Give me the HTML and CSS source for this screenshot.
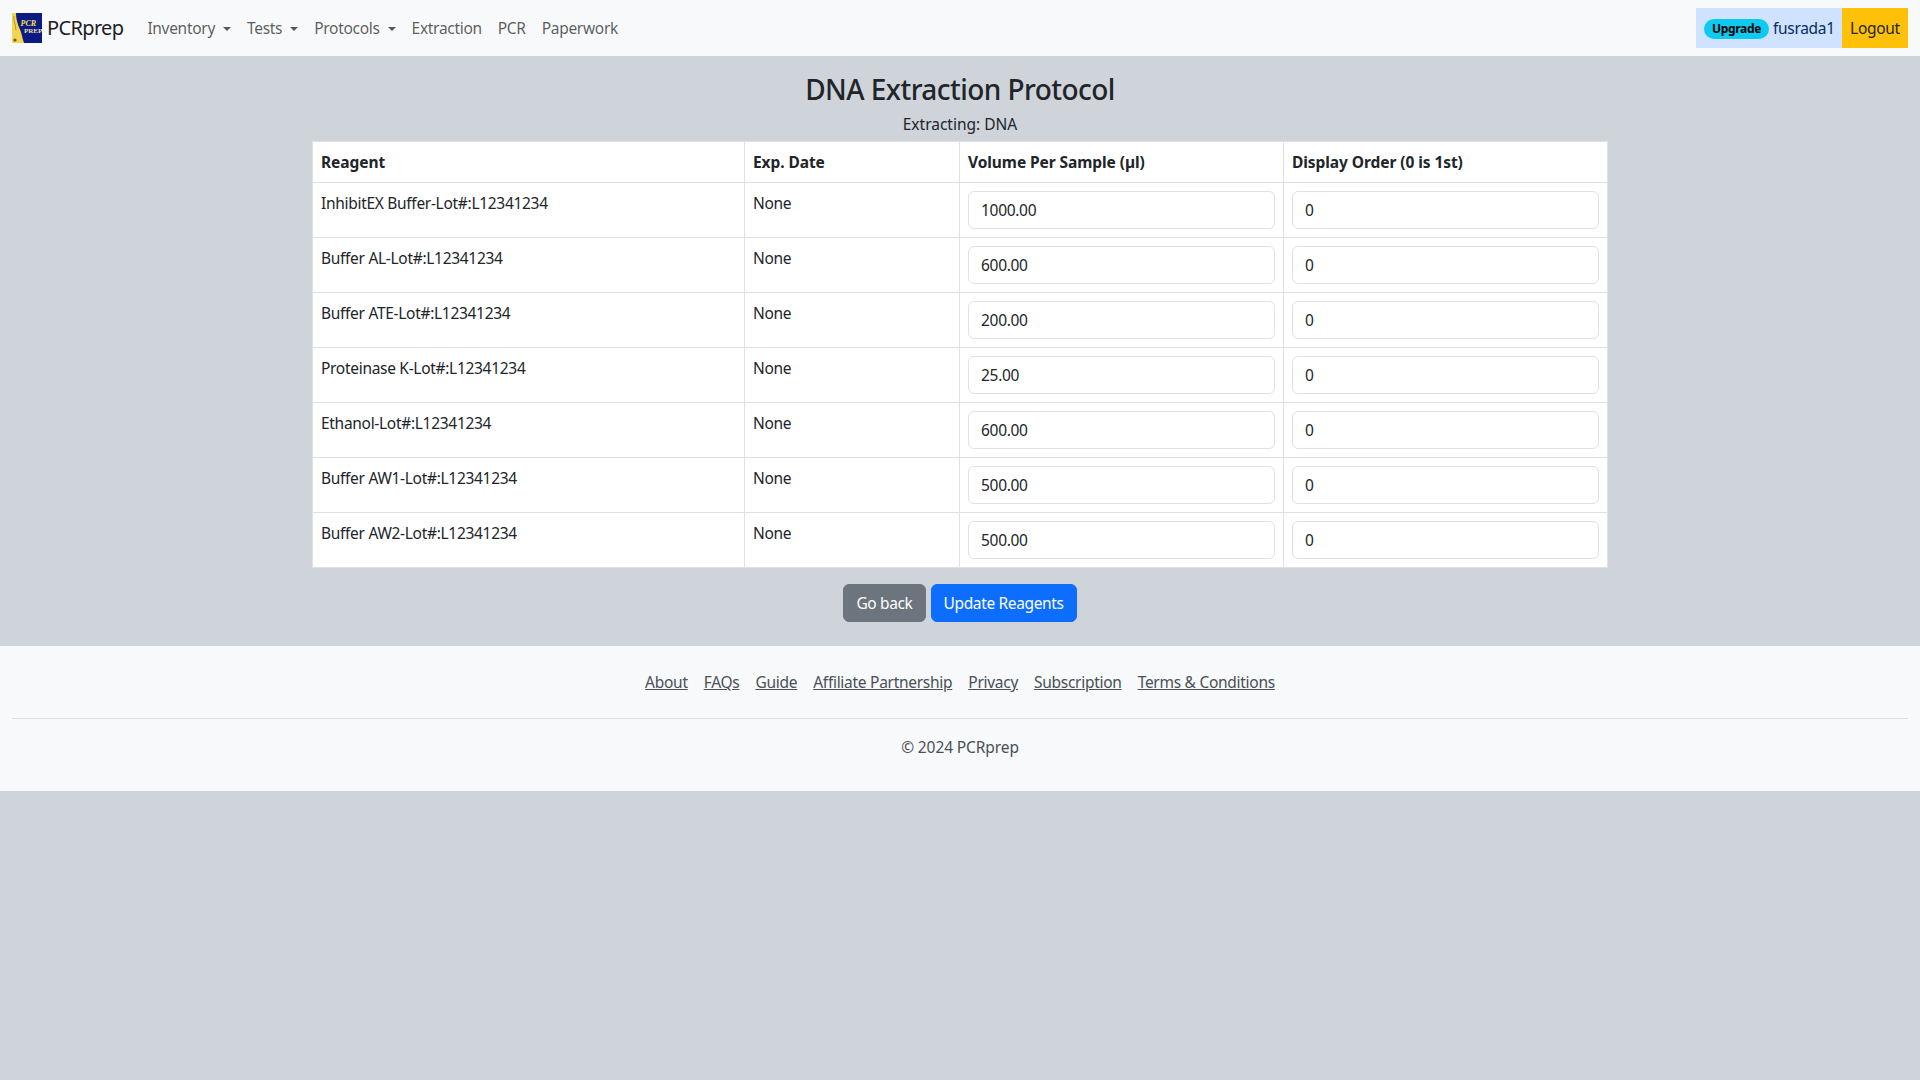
FILE: index.html
```html
<!DOCTYPE html>
<html lang="en">
<head>
<meta charset="utf-8">
<title>DNA Extraction Protocol</title>
<link rel="stylesheet" href="styles.css">
</head>
<body>
<nav class="navbar">
  <a class="brand" href="#">
    <svg class="logo" width="30" height="30" viewBox="0 0 30 30">
      <rect width="30" height="30" fill="#0c1a84"/>
      <path d="M0 0H4C4 8 7 14 9 19C10 23 11 27 12 30H0Z" fill="#f4d551"/>
      <path d="M2 3C1 9 4 11 4 17" fill="none" stroke="#b3932f" stroke-width="1"/>
      <circle cx="3" cy="27" r="1.6" fill="#6b5a20"/>
      <text x="8.5" y="13" class="logo-a">PCR</text>
      <text x="12" y="20" class="logo-b">PREP</text>
    </svg>
    <span>PCRprep</span>
  </a>
  <ul class="nav">
    <li class="drop">Inventory</li>
    <li class="drop">Tests</li>
    <li class="drop">Protocols</li>
    <li>Extraction</li>
    <li>PCR</li>
    <li>Paperwork</li>
  </ul>
  <div class="user">
    <div class="user-name"><span class="badge">Upgrade</span><span>fusrada1</span></div>
    <a class="logout" href="#">Logout</a>
  </div>
</nav>
<main class="main">
  <h1>DNA Extraction Protocol</h1>
  <p class="sub">Extracting: DNA</p>
  <table class="table">
    <colgroup><col class="c1"><col class="c2"><col class="c3"><col class="c4"></colgroup>
    <thead><tr><th>Reagent</th><th>Exp. Date</th><th>Volume Per Sample (µl)</th><th>Display Order (0 is 1st)</th></tr></thead>
    <tbody>
      <tr><td>InhibitEX Buffer-Lot#:L12341234</td><td>None</td><td><input class="field" value="1000.00"></td><td><input class="field" value="0"></td></tr>
      <tr><td>Buffer AL-Lot#:L12341234</td><td>None</td><td><input class="field" value="600.00"></td><td><input class="field" value="0"></td></tr>
      <tr><td>Buffer ATE-Lot#:L12341234</td><td>None</td><td><input class="field" value="200.00"></td><td><input class="field" value="0"></td></tr>
      <tr><td>Proteinase K-Lot#:L12341234</td><td>None</td><td><input class="field" value="25.00"></td><td><input class="field" value="0"></td></tr>
      <tr><td>Ethanol-Lot#:L12341234</td><td>None</td><td><input class="field" value="600.00"></td><td><input class="field" value="0"></td></tr>
      <tr><td>Buffer AW1-Lot#:L12341234</td><td>None</td><td><input class="field" value="500.00"></td><td><input class="field" value="0"></td></tr>
      <tr><td>Buffer AW2-Lot#:L12341234</td><td>None</td><td><input class="field" value="500.00"></td><td><input class="field" value="0"></td></tr>
    </tbody>
  </table>
  <div class="actions">
    <a class="btn btn-grey" href="#">Go back</a>
    <a class="btn btn-blue" href="#">Update Reagents</a>
  </div>
</main>
<footer class="footer">
  <ul class="foot-links">
    <li><a href="#">About</a></li>
    <li><a href="#">FAQs</a></li>
    <li><a href="#">Guide</a></li>
    <li><a href="#">Affiliate Partnership</a></li>
    <li><a href="#">Privacy</a></li>
    <li><a href="#">Subscription</a></li>
    <li><a href="#">Terms &amp; Conditions</a></li>
  </ul>
  <hr class="rule">
  <p class="copy">© 2024 PCRprep</p>
</footer>
</body>
</html>
```
FILE: styles.css
```css
* { box-sizing: border-box; }
html, body { height: 100%; }
body {
  margin: 0;
  background: #ced4da;
  color: #212529;
  font: 15.5px/24px "Noto Sans", sans-serif;
  letter-spacing: -0.3px;
}
a { color: inherit; }
.navbar {
  height: 56px;
  background: #f8f9fa;
  display: flex;
  align-items: center;
  padding: 0 12px;
}
.brand {
  display: flex;
  align-items: center;
  gap: 5px;
  font-size: 20px;
  letter-spacing: -0.65px;
  text-decoration: none;
  margin-right: 16px;
  color: #1c2024;
}
.logo { display: block; }
.logo-a { font: italic 700 8px "Liberation Serif", serif; fill: #f6e04a; letter-spacing: 0; }
.logo-b { font: 700 7px "Liberation Serif", serif; fill: #e8e0a0; letter-spacing: 0; }
.nav {
  list-style: none;
  display: flex;
  margin: 0;
  padding: 0;
  color: rgba(0, 0, 0, .65);
}
.nav li { padding: 0 8px; }
.drop::after {
  content: "";
  display: inline-block;
  margin-left: 8px;
  vertical-align: 3px;
  border-top: 4.8px solid;
  border-left: 4.8px solid transparent;
  border-right: 4.8px solid transparent;
}
.user {
  margin-left: auto;
  display: flex;
  height: 40px;
}
.user-name {
  background: #cfe2ff;
  display: flex;
  align-items: center;
  gap: 4px;
  width: 146px;
  padding-left: 8px;
  color: #052c65;
}
.badge {
  background: #0dcaf0;
  color: #000;
  font-size: 12px;
  font-weight: 700;
  line-height: 20px;
  width: 65px;
  text-align: center;
  border-radius: 10px;
  margin-top: 2px;
}
.logout {
  background: #ffc107;
  width: 66px;
  text-align: center;
  line-height: 40px;
  text-decoration: none;
  color: #212529;
}
.main {
  padding-top: 16px;
  height: 590px;
  display: flex;
  flex-direction: column;
  align-items: center;
}
h1 {
  margin: 0 0 6px;
  font-size: 28px;
  line-height: 34px;
  font-weight: 500;
  letter-spacing: -0.55px;
}
.sub { margin: 0 0 5px; letter-spacing: 0; }
.table {
  width: 1295px;
  table-layout: fixed;
  border-collapse: collapse;
  background: #fff;
}
.c1 { width: 432px; }
.c2 { width: 215px; }
.c3 { width: 324px; }
.c4 { width: 324px; }
th, td {
  border: 1px solid #dee2e6;
  padding: 8px;
  text-align: left;
  vertical-align: top;
}
th { font-weight: 700; height: 41px; letter-spacing: -0.07px; }
td { height: 55px; }
.field {
  display: block;
  width: 100%;
  height: 38px;
  border: 1px solid #dee2e6;
  border-radius: 6px;
  padding: 0 12px;
  font: inherit;
  letter-spacing: inherit;
  color: #212529;
  background: #fff;
}
.actions { display: flex; gap: 5px; margin-top: 16px; }
.btn {
  height: 38px;
  line-height: 36px;
  padding: 0 12px;
  border: 1px solid;
  border-radius: 6px;
  text-decoration: none;
  color: #fff;
  letter-spacing: -0.36px;
}
.btn-grey { background: #6c757d; border-color: #6c757d; }
.btn-blue { background: #0d6efd; border-color: #0d6efd; }
.footer {
  background: #f8f9fa;
  height: 145px;
  padding: 24px 12px 0;
  color: #495057;
}
.foot-links {
  list-style: none;
  display: flex;
  justify-content: center;
  gap: 16px;
  margin: 0;
  padding: 0;
  letter-spacing: -0.28px;
}
.rule {
  margin: 24px 0 16px;
  border: 0;
  border-top: 1px solid #dee2e6;
}
.copy { margin: 0; text-align: center; letter-spacing: -0.1px; }
```
